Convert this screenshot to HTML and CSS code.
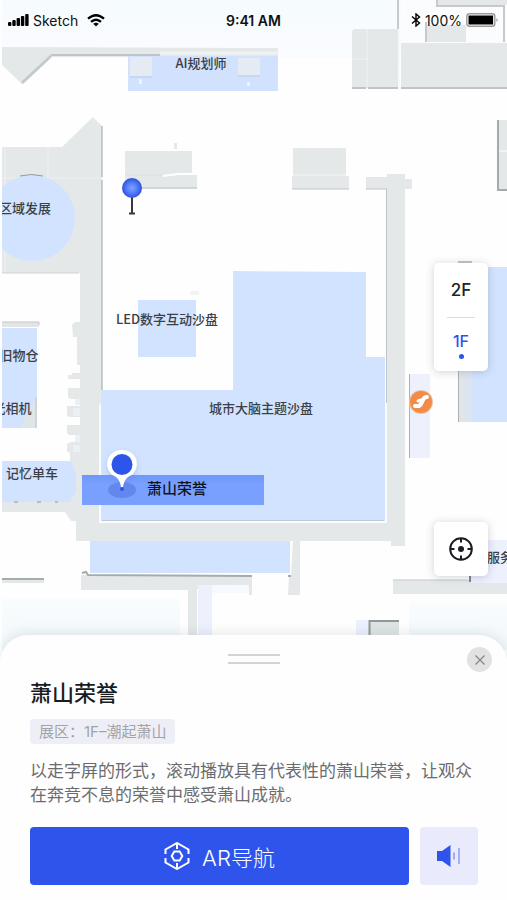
FILE: index.html
```html
<!DOCTYPE html>
<html lang="zh-CN">
<head>
<meta charset="utf-8">
<meta name="viewport" content="width=device-width, initial-scale=1">
<title>萧山荣誉</title>
<link rel="stylesheet" href="styles.css">
</head>
<body>
<div class="app">
  <svg class="map" viewBox="0 0 507 660" preserveAspectRatio="xMidYMin slice" role="img" aria-label="1F">
    <defs>
      <linearGradient id="sky" x1="0" y1="0" x2="0" y2="1"><stop offset="0" stop-color="#f6fbff"/><stop offset="1" stop-color="#fafcfe"/></linearGradient>
      <linearGradient id="floor" x1="0" y1="0" x2="0" y2="1"><stop offset="0" stop-color="#fafdfe"/><stop offset="1" stop-color="#f1f7fa"/></linearGradient>
      <linearGradient id="band" x1="0" y1="0" x2="0" y2="1"><stop offset="0" stop-color="#6f97fa"/><stop offset=".35" stop-color="#7aa0ff"/></linearGradient>
      <linearGradient id="edge"><stop offset="0" stop-color="#e1e5e6"/><stop offset="1" stop-color="#d9e5f4"/></linearGradient>
      <radialGradient id="ball"><stop offset="0" stop-color="#7ba2ff"/><stop offset=".5" stop-color="#5680f9"/><stop offset="1" stop-color="#2f50df"/></radialGradient>
      <filter id="soft" x="-50%" y="-50%" width="200%" height="200%"><feGaussianBlur stdDeviation="3"/></filter>
      <clipPath id="view"><rect x="2" width="505" height="660"/></clipPath>
    </defs>
    <rect width="507" height="660" fill="#fefefe"/>
    <g clip-path="url(#view)">
      <rect x="2" width="505" height="58" fill="url(#sky)"/>
      <g fill="#e4e8e9">
        <path d="M2 47 278 48V57H51L22 84 2 65Z"/>
        <path d="M352 31 354 29H398V88H352ZM401 43H507V88H401Z"/>
      </g>
      <path d="M22 83 51 56" stroke="#c3cacd" stroke-width="3"/>
      <path d="M51 55H160" stroke="#bfc4c7" stroke-width="2"/>
      <path d="M160 53H278" stroke="#f0f2f1" stroke-width="3"/>
      <path d="M128 56H278V91H128Z" fill="#d2e2fe"/>
      <path d="M130 57H152V76H130ZM238 58H260V75H238Z" fill="#e4ebf3"/>
      <path d="M130 77H152M238 76H260" stroke="#bdcce6"/>
      <path d="M139 79H142V84H139ZM247 82H250V86H247Z" fill="#eef4fd"/>
      <rect x="401" width="106" height="42" fill="#fafcfe"/>
      <path d="M437 0H507V5H437ZM426 25H466V42H426Z" fill="#e4e8e9"/>
      <path d="M437 0V6H504V42M426 22V42M398 0V29" fill="none" stroke="#c6cacc" stroke-width="2"/>
      <path d="M352 88H366M368 88H398M401 88H507" stroke="#bfc4c6" stroke-width="2"/>
      <path d="M367 29V86M353 59H366M399 30V88" stroke="#f1f3f4"/>

      <path fill="#e4e8e9" d="M2 147H62L93 117 102 126V400L100 404V521H387V174H405V546H391V541H76V521H71L65 512H2V502H70L75 486V273H2Z"/>
      <path d="M2 273H80V502H2Z" fill="#fefefe"/>
      <path d="M102 126V177M102 180V403" stroke="#9ca2a6"/>
      <path d="M48 147V178M2 178H102M5 147V273" stroke="#eef1f2"/>
      <path d="M2 273H79" stroke="#ced3d5"/>
      <circle cx="32" cy="218" r="43" fill="#d2e3ff"/>
      <path d="M20 176Q31 173 43 176" fill="none" stroke="#8e9ba6"/>
      <path fill="#e4e8e9" d="M125 151H192V175H197V189H125ZM293 148H346V174H293ZM292 176H349V189H292ZM366 177H387V189H366ZM405 179H412V189H405ZM174 143H177V149H174ZM497 120H507V190H497Z"/>
      <path d="M163 176 178 174H192" stroke="#fff" fill="none" stroke-width="2"/>
      <path d="M125 175H163M293 175H346" stroke="#dde0e1"/>
      <path d="M142 188H197M292 189H349M366 189H387" stroke="#bec4c6"/>
      <path d="M498 120V190H507" fill="none" stroke="#a5aaac" stroke-width="2"/>
      <path d="M499 151H507" stroke="#fff"/>
      <path d="M386.500 189V403" stroke="#c0c5c7"/>

      <path fill="#d2e3ff" d="M233 271 366 272V357H385V521H101V390H233Z"/>
      <path d="M100 405V522H386V405" fill="none" stroke="#fafbfc" stroke-width="2"/>
      <path d="M102 520.500H384" fill="none" stroke="#bfcbdc"/>
      <path fill="#d2e3ff" d="M138 300H196V357H138Z"/>
      <path d="M190 291H199V295H190Z" fill="#f1f3f4"/>
      <path d="M2 322H39V327H2Z" fill="#e3e5e5"/>
      <path d="M2 322H39V325" stroke="#c5c8c9" fill="none"/>
      <path d="M2 328H37V428H2Z" fill="#d2e3ff"/>
      <path d="M22 428V423L37 396V428Z" fill="#e0e5e8"/>
      <path d="M36 397V428" stroke="#bfc6cb"/>
      <path fill="#e4e8e9" d="M72 325 75 322H80V365H77V337H73ZM68 375H72V373H80V379H68ZM68 388H80V399H70L68 397ZM67 406H80V417H69L67 415ZM67 425H80V435H69L67 433ZM67 444 71 442H80V505H70V453L67 451Z"/>
      <path fill="#eaf0f3" d="M75 399H80V405H75ZM73 408H80V416H73ZM75 435H80V442H75ZM73 445H80V452H73Z"/>
      <path d="M2 461H71L76 474V492L70 502H2Z" fill="#d2e3ff"/>
      <path d="M14 502H18M37 502H41M55 502H58" stroke="#7f96b0"/>

      <path d="M82 475H264V505H82Z" fill="url(#band)"/>
      <path d="M90 541H290V573H90Z" fill="#d2e3ff"/>
      <path fill="#e4e8e9" d="M81 575H252V595H249V589H197V640H188V590H81ZM289 576H291L293 540H300V595H288ZM393 580H507V594H393ZM2 580H44V583H2Z"/>
      <path d="M82 573 86 572 88 575 252 576M288 576H291M2 579H44" fill="none" stroke="#a7abad" stroke-width="2"/>
      <path d="M393 580H468" stroke="#c6cacb"/>
      <path d="M2 598H180V650H2ZM409 601H507V650H409Z" fill="url(#floor)"/>
      <path d="M198 585H212V640H198ZM356 620H369V640H356ZM470 540H507V583H470ZM409 374H430V458H409Z" fill="#edf0fd"/>
      <path d="M212 585H249V593H212Z" fill="#f6f9fe"/>
      <path d="M369 620H399V640H369Z" fill="#dfe3e4"/>
      <path d="M369.500 640V621H399" fill="none" stroke="#92979a" stroke-width="2"/>
      <path d="M409.500 374V458M458.500 262V422" stroke="#aab0b5"/>
      <path d="M470 267H507V422H470Z" fill="#d2e3ff"/>
      <path d="M459 267H472V422H459Z" fill="url(#edge)"/>
      <path d="M458 262H472" stroke="#c2c6c8" stroke-width="2"/>
      <path d="M470 575V582" stroke="#7c8588" stroke-width="2"/>

      <circle cx="421" cy="402" r="12" fill="#e9c6a1"/>
      <circle cx="421" cy="402" r="11" fill="#f08b48"/>
      <path d="M415 406H418Q420 406 421 404L423 400Q424 397 427 397" fill="none" stroke="#fff" stroke-width="4" stroke-linecap="round"/>
      <path d="M418 401 421 400" stroke="#fff" stroke-width="3" stroke-linecap="round"/>

      <g class="label">
        <text x="201" y="68">AI规划师</text>
        <text x="25" y="213">区域发展</text>
        <text x="167" y="324">LED数字互动沙盘</text>
        <text x="261" y="413">城市大脑主题沙盘</text>
        <text x="19" y="360">旧物仓</text>
        <text x="12" y="413">光相机</text>
        <text x="32" y="478">记忆单车</text>
        <text x="500" y="562">服务</text>
      </g>
      <text class="label label-active" x="177" y="494">萧山荣誉</text>

      <path d="M132 197V213M129 213.500H135" stroke="#34383f" stroke-width="2"/>
      <circle cx="132" cy="188" r="10" fill="url(#ball)"/>
      <ellipse cx="122" cy="490" rx="14" ry="8" fill="#6288ed"/>
      <circle cx="122" cy="467" r="14" fill="#6d8ed5" opacity=".4" filter="url(#soft)"/>
      <path d="M122 450A14 14 0 0 1 128 477Q124 480 123 487H121Q120 480 116 477A14 14 0 0 1 122 450Z" fill="#fff"/>
      <circle cx="122" cy="464.500" r="10.500" fill="#2e55ea"/>
      <circle cx="122" cy="489" r="2" fill="#2e55ea"/>
    </g>
  </svg>

  <header class="status">
    <div class="status-left">
      <svg width="21" height="12" viewBox="0 0 21 12" aria-hidden="true"><g><rect y="8" width="3.400" height="4" rx="1"/><rect x="4.300" y="6" width="3.400" height="6" rx="1"/><rect x="8.600" y="4" width="3.400" height="8" rx="1"/><rect x="12.900" y="2" width="3.400" height="10" rx="1"/><rect x="17.200" width="3.400" height="12" rx="1"/></g></svg>
      <span>Sketch</span>
      <svg class="wifi" width="18" height="13" viewBox="0 0 18 13" aria-hidden="true"><g fill="none" stroke="#000" stroke-width="2.300"><path d="M1 4.700Q9-2.300 17 4.700M4 7.900Q9 3.500 14 7.900"/></g><path d="M9 12.500 6.200 9.700Q9 7.600 11.800 9.700Z"/></svg>
    </div>
    <time class="clock">9:41 AM</time>
    <div class="status-right">
      <svg width="10" height="14" viewBox="0 0 10 14" aria-hidden="true"><path d="M1 3.500 8.500 10 5 13V1L8.500 4 1 10.500" fill="none" stroke="#000" stroke-width="1.400"/></svg>
      <span>100%</span>
      <svg width="33" height="14" viewBox="0 0 33 14" aria-hidden="true"><rect x=".8" y=".8" width="28" height="12.400" rx="2.500" fill="#fff" stroke="#999" stroke-width="1.400"/><rect x="2.500" y="2.500" width="24.600" height="9"/><path d="M30.500 5Q33 7 30.500 9Z" fill="#999"/></svg>
    </div>
  </header>

  <main class="tools">
    <nav class="floors">
      <button class="floor" type="button">2F</button>
      <button class="floor floor-on" type="button" aria-current="true">1F</button>
    </nav>
    <button class="locate" type="button" aria-label="定位">
      <svg width="26" height="26" viewBox="0 0 26 26" fill="none" stroke="#1c1d20" stroke-width="2"><circle cx="13" cy="13" r="10.800"/><path d="M13 2V6.500M13 19.500V24M2 13H6.500M19.500 13H24"/><circle cx="13" cy="13" r="3" fill="#1c1d20" stroke="none"/></svg>
    </button>
  </main>

  <section class="sheet">
    <span class="handle"></span>
    <button class="close" type="button" aria-label="关闭">
      <svg width="12" height="12" viewBox="0 0 12 12"><path d="M1.500 1.500 10.500 10.500M10.500 1.500 1.500 10.500" stroke="#888" stroke-width="1.300"/></svg>
    </button>
    <h1 class="title">萧山荣誉</h1>
    <p class="tag">展区：1F–潮起萧山</p>
    <p class="desc">以走字屏的形式，滚动播放具有代表性的萧山荣誉，让观众在奔竞不息的荣誉中感受萧山成就。</p>
    <div class="actions">
      <button class="go" type="button">
        <svg width="26" height="28" viewBox="0 0 26 28" fill="none" stroke="#fff" stroke-width="2"><path d="M1.500 12V7.500L13 1 24.500 7.500V12M1.500 16V20.500L13 27 24.500 20.500V16M13 1V7M13 21V27"/><path d="M10.300 9.500H15.700L18.300 14 15.700 18.500H10.300L7.700 14Z"/></svg>
        <span>AR导航</span>
      </button>
      <button class="sound" type="button" aria-label="语音">
        <svg width="24" height="22" viewBox="0 0 24 22"><path d="M0 6H5L13.500 0V22L5 16H0Z" fill="#2f54eb"/><path d="M17 7.500V14.500" stroke="#9caaf3" stroke-width="2"/><path d="M22 3V19" stroke="#a5b1f4" stroke-width="2"/></svg>
      </button>
    </div>
  </section>
</div>
</body>
</html>
```
FILE: styles.css
```css
* { box-sizing: border-box; }

body {
  margin: 0;
  background: #fefefe;
  font-family: Inter, "Noto Sans CJK SC", sans-serif;
}

button {
  margin: 0;
  padding: 0;
  border: 0;
  font: inherit;
  cursor: pointer;
}

h1, p { margin: 0; }
svg { display: block; flex: none; }

.app {
  position: relative;
  display: flex;
  flex-direction: column;
  min-height: 100vh;
  overflow: hidden;
}

.map {
  position: absolute;
  top: 0;
  left: 0;
  width: 100%;
}

.label {
  fill: #3b3f46;
  font-family: "Noto Sans CJK SC", sans-serif;
  font-size: 13px;
  font-weight: 500;
  text-anchor: middle;
}

.label-active {
  fill: #10131c;
  font-size: 15px;
}

.status {
  position: relative;
  display: grid;
  grid-template-columns: 1fr auto 1fr;
  align-items: center;
  height: 40px;
  padding: 0 8px;
  color: #111;
  font-size: 14px;
}

.status-left, .status-right {
  display: flex;
  align-items: center;
  gap: 4px;
}

.status-right { justify-content: flex-end; }
.wifi { margin-left: 5px; }
.clock { font-weight: 600; }

.tools {
  position: relative;
  display: flex;
  flex: 1;
  flex-direction: column;
  align-items: flex-end;
  justify-content: flex-end;
  gap: 151px;
  padding: 0 19px 59px;
}

.floors, .locate {
  width: 54px;
  border-radius: 5px;
  background: #fff;
  box-shadow: 0 1px 8px rgba(40, 50, 70, .22);
}

.floor {
  position: relative;
  display: block;
  width: 100%;
  height: 54px;
  background: none;
  color: #202226;
  font-size: 17px;
  font-weight: 500;
}

.floor-on { color: #2f54eb; font-size: 16px; padding-bottom: 6px; }

.floor-on::before {
  content: "";
  position: absolute;
  top: 0;
  left: 13px;
  right: 13px;
  height: 1px;
  background: #ddd;
}

.floor-on::after {
  content: "";
  position: absolute;
  bottom: 12px;
  left: 50%;
  width: 5px;
  height: 5px;
  margin-left: -2px;
  border-radius: 50%;
  background: #2f54eb;
}

.locate {
  display: grid;
  place-items: center;
  height: 54px;
}

.sheet {
  position: relative;
  padding: 19px 29px 15px 30px;
  border-radius: 28px 28px 0 0;
  background: #fefefe;
  box-shadow: 0 -2px 12px rgba(60, 70, 90, .12);
}

.handle {
  display: block;
  width: 52px;
  height: 10px;
  margin: 0 auto;
  border: solid #d3d3d3;
  border-width: 2px 0;
}

.close {
  position: absolute;
  top: 12px;
  right: 15px;
  display: grid;
  place-items: center;
  width: 25px;
  height: 25px;
  border-radius: 50%;
  background: #e2e2e2;
}

.title {
  margin-top: 13px;
  color: #1a1b1e;
  font-size: 22px;
  font-weight: 500;
  line-height: 32px;
}

.tag {
  width: fit-content;
  margin-top: 10px;
  padding: 0 9px;
  border-radius: 4px;
  background: #eeeff6;
  color: #a2a3a8;
  font-size: 15px;
  line-height: 25px;
}

.desc {
  margin-top: 15px;
  color: #6b6c70;
  font-size: 17px;
  line-height: 24px;
}

.actions {
  display: flex;
  gap: 11px;
  margin-top: 20px;
}

.go, .sound {
  display: flex;
  align-items: center;
  justify-content: center;
  height: 58px;
  border-radius: 4px;
}

.go {
  flex: 1;
  gap: 12px;
  background: #2f54eb;
  color: #fff;
  font-size: 22px;
  font-weight: 300;
}

.sound {
  width: 58px;
  background: #e9eafc;
}
```
